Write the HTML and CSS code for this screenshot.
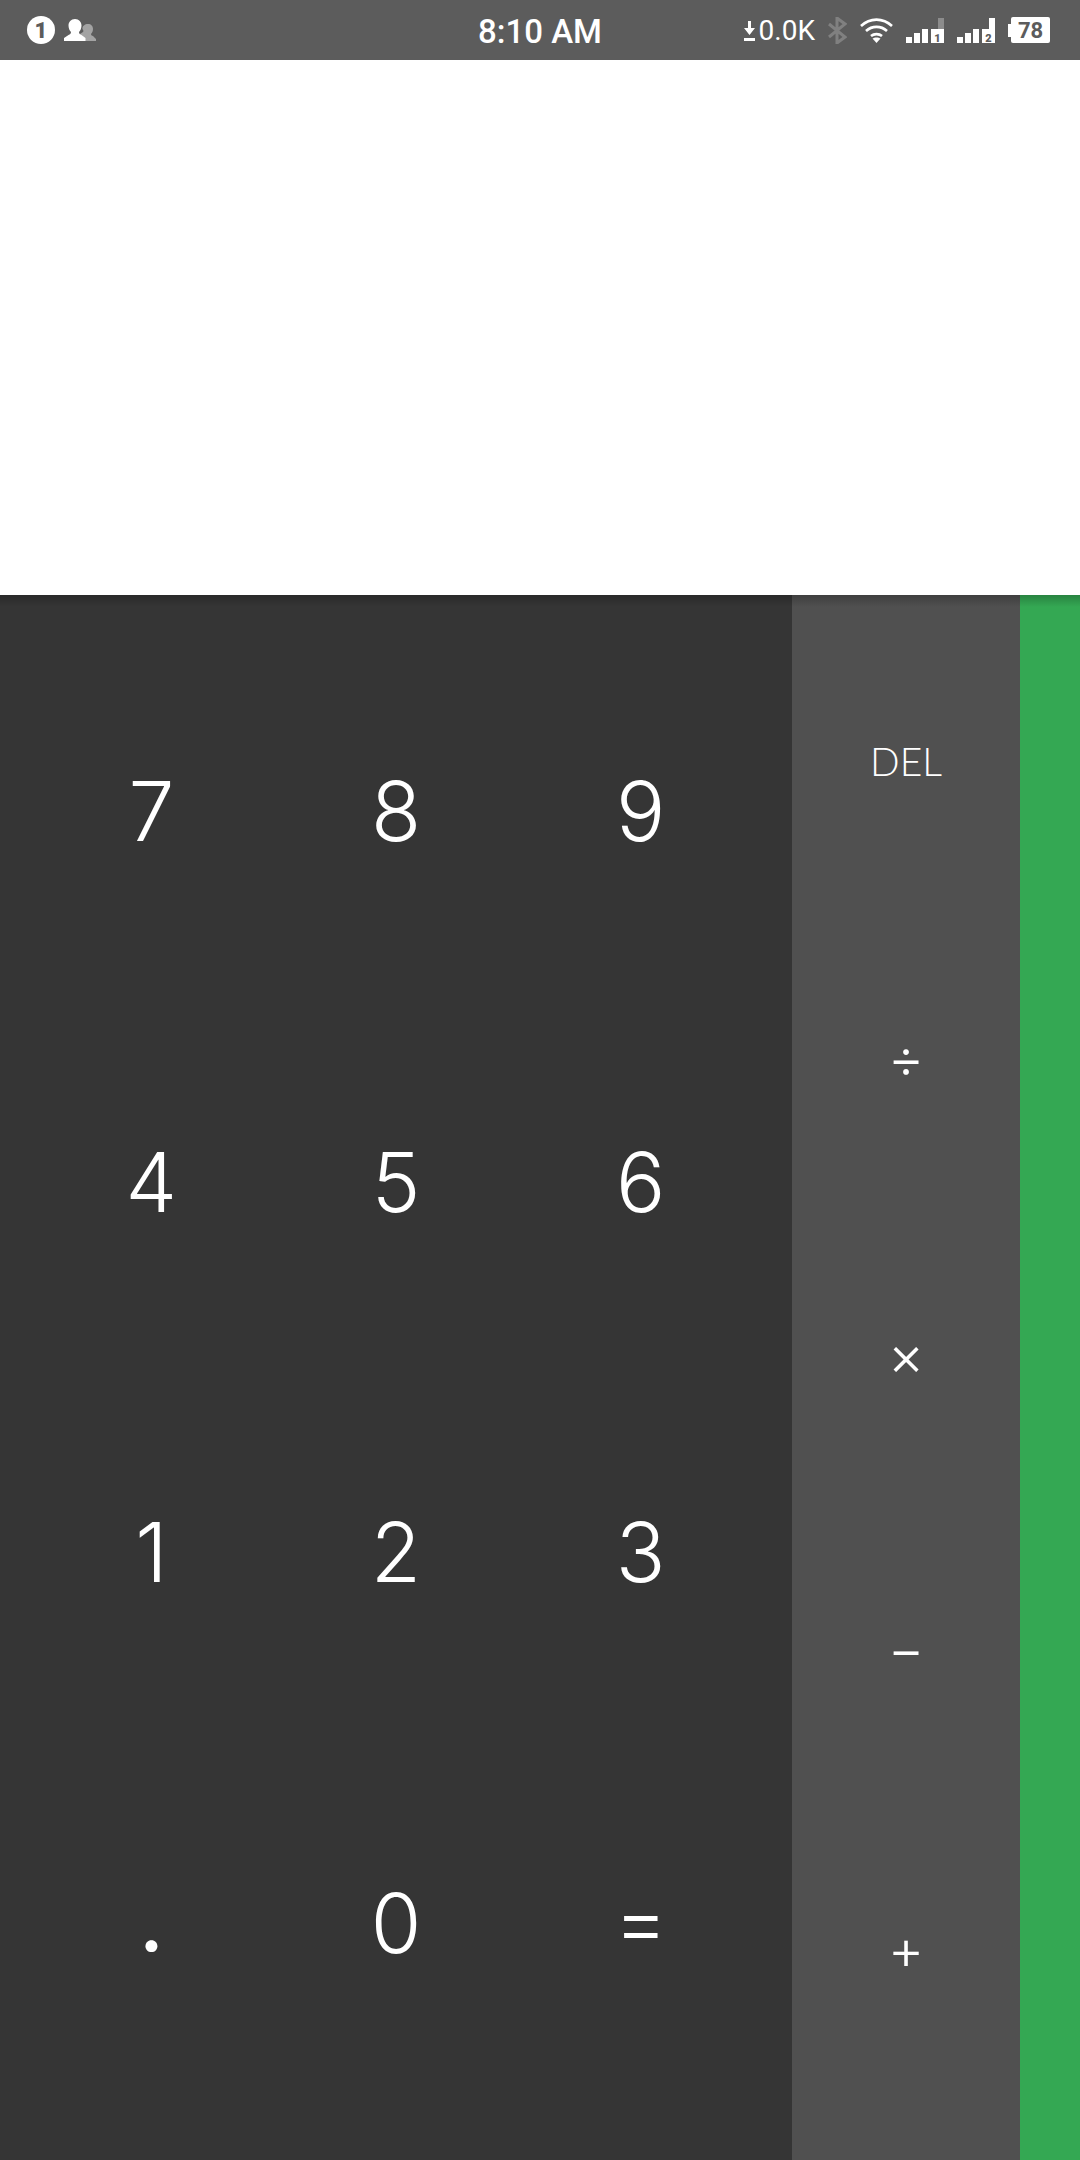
FILE: index.html
```html
<!DOCTYPE html>
<html lang="en">
<head>
  <meta charset="UTF-8">
  <meta name="viewport" content="width=device-width, initial-scale=1.0">
  <title>Calculator</title>
  <link rel="stylesheet" href="styles.css">
</head>
<body>

  <!-- Status bar -->
  <div class="status-bar">
    <div class="status-left">
      <span class="notify-badge">1</span>
      <svg class="icon-people" width="32" height="22" viewBox="0 0 32 22">
        <path fill="#a3a3a3" d="M24 5c3 0 5 2 5 5 0 2-1 4-2 5 0 1 1 2 2 2l3 3v2H16v-7l3-2c1-1 0-2-.5-3C18 7 21 5 24 5z"/>
        <path fill="#fff" d="M11 0c4 0 6.500 3 6.500 6.500 0 2.500-1 5-2.500 6.500 0 1.500 1 2.500 2.500 3l4 3v3H0v-3l4.500-3c1.500-.5 2.500-1.500 2.500-3C5.500 11.500 4.500 9 4.500 6.500 4.500 3 7 0 11 0z"/>
      </svg>
    </div>
    <div class="status-time">8:10 AM</div>
    <div class="status-right">
      <div class="net-speed">
        <svg width="11" height="20" viewBox="0 0 11 20">
          <path fill="#fff" d="M4 0h3v7h4l-5.500 7L0 7h4zM0 17h11v3H0z"/>
        </svg>
        <span>0.0K</span>
      </div>
      <svg class="icon-bt" width="19" height="27" viewBox="0 0 19 27">
        <path fill="none" stroke="#808080" stroke-width="3" d="M1 7l16 13-8 6V1l8 6L1 20"/>
      </svg>
      <svg class="icon-wifi" width="33" height="25" viewBox="0 0 33 25">
        <g fill="none" stroke="#fff" stroke-width="2.600">
          <path d="M1 8c9-8.500 22-8.500 31 0"/>
          <path d="M6 13c6-5.500 15-5.500 21 0"/>
          <path d="M11 18c3-2.500 8-2.500 11 0"/>
        </g>
        <path fill="#fff" d="M16.500 25l-4-4.500c2-1.500 6-1.500 8 0z"/>
      </svg>
      <svg class="icon-signal" width="38" height="25" viewBox="0 0 38 25">
        <rect y="19" width="6" height="6" fill="#fff"/>
        <rect x="8" y="15" width="6" height="10" fill="#fff"/>
        <rect x="16" y="11" width="6" height="14" fill="#fff"/>
        <rect x="25" y="11" width="13" height="14" fill="#fff"/>
        <rect x="32" y="0" width="6" height="11" fill="#8c8c8c"/>
        <text class="sim-num" x="31.500" y="23.500" text-anchor="middle">1</text>
      </svg>
      <svg class="icon-signal" width="38" height="25" viewBox="0 0 38 25">
        <rect y="19" width="6" height="6" fill="#fff"/>
        <rect x="8" y="15" width="6" height="10" fill="#fff"/>
        <rect x="16" y="11" width="6" height="14" fill="#fff"/>
        <rect x="25" y="11" width="13" height="14" fill="#fff"/>
        <rect x="32" y="0" width="6" height="11" fill="#fff"/>
        <text class="sim-num" x="31.500" y="23.500" text-anchor="middle">2</text>
      </svg>
      <div class="battery">
        <span class="battery-cap"></span>
        <span class="battery-level">78</span>
      </div>
    </div>
  </div>

  <!-- Calculator display -->
  <div class="display"></div>

  <!-- Keypad -->
  <div class="pad">
    <div class="digits">
      <button>7</button>
      <button>8</button>
      <button>9</button>
      <button>4</button>
      <button>5</button>
      <button>6</button>
      <button>1</button>
      <button>2</button>
      <button>3</button>
      <button class="point">.</button>
      <button>0</button>
      <button class="equals">=</button>
    </div>
    <div class="ops">
      <button class="del">DEL</button>
      <button>÷</button>
      <button>×</button>
      <button class="minus">−</button>
      <button>+</button>
    </div>
    <div class="drawer"></div>
  </div>

</body>
</html>
```

FILE: styles.css
```css
* {
  box-sizing: border-box;
}

body {
  margin: 0;
  width: 1080px;
  height: 2160px;
  display: flex;
  flex-direction: column;
  overflow: hidden;
  background: #fff;
  font-family: Inter, sans-serif;
}

.status-bar {
  height: 60px;
  flex-shrink: 0;
  display: grid;
  grid-template-columns: 1fr auto 1fr;
  align-items: center;
  background: #5c5c5c;
  color: #fff;
  font-family: Roboto, sans-serif;
}

.status-left {
  display: flex;
  align-items: center;
  gap: 9px;
  padding-left: 27px;
}

.notify-badge {
  width: 28px;
  height: 28px;
  border-radius: 50%;
  display: flex;
  justify-content: center;
  align-items: center;
  background: #fff;
  color: #5c5c5c;
  font-size: 22px;
  font-weight: 900;
}

.status-time {
  font-size: 33px;
  font-weight: 500;
  padding-top: 2px;
}

.status-right {
  display: flex;
  justify-content: flex-end;
  align-items: center;
  gap: 13px;
  padding-right: 30px;
}

.net-speed {
  display: flex;
  align-items: center;
  gap: 4px;
  padding-top: 1px;
  font-size: 28px;
  font-weight: 400;
}

.sim-num {
  font-family: Roboto, sans-serif;
  font-size: 11px;
  font-weight: 900;
  fill: #5c5c5c;
}

.battery {
  display: flex;
  align-items: center;
}

.battery-cap {
  width: 3px;
  height: 13px;
  background: #fff;
}

.battery-level {
  width: 39px;
  height: 26px;
  border-radius: 2px;
  display: flex;
  justify-content: center;
  align-items: center;
  background: #fff;
  color: #5c5c5c;
  font-size: 22px;
  font-weight: 700;
}

.display {
  height: 535px;
  flex-shrink: 0;
  background: #fff;
}

.pad {
  flex: 1;
  display: flex;
  position: relative;
}

/* shadow under the display, falls over all three columns */
.pad::before {
  content: "";
  position: absolute;
  top: 0;
  left: 0;
  right: 0;
  height: 12px;
  background: linear-gradient(rgba(0, 0, 0, 0.22), rgba(0, 0, 0, 0));
}

button {
  border: none;
  padding: 0;
  background: none;
  color: #fff;
  font-family: inherit;
  font-weight: 300;
  display: flex;
  justify-content: center;
  align-items: center;
}

.digits {
  width: 792px;
  padding: 31px 29px 51px;
  display: grid;
  grid-template-columns: repeat(3, 1fr);
  grid-template-rows: repeat(4, 1fr);
  background: #353535;
}

.digits button {
  font-size: 82px;
}

.digits .equals {
  padding-bottom: 6px;
}

.digits .point {
  padding-bottom: 4px;
  font-weight: 500;
}

.ops {
  width: 228px;
  padding: 17px 0 63px;
  display: grid;
  grid-template-rows: repeat(5, 1fr);
  background: #505050;
}

.ops button {
  font-size: 56px;
}

.ops .minus {
  padding-bottom: 6px;
}

.ops .del {
  font-size: 39px;
  font-family: Lato, sans-serif;
}

.drawer {
  flex: 1;
  background: #34a853;
}
```
